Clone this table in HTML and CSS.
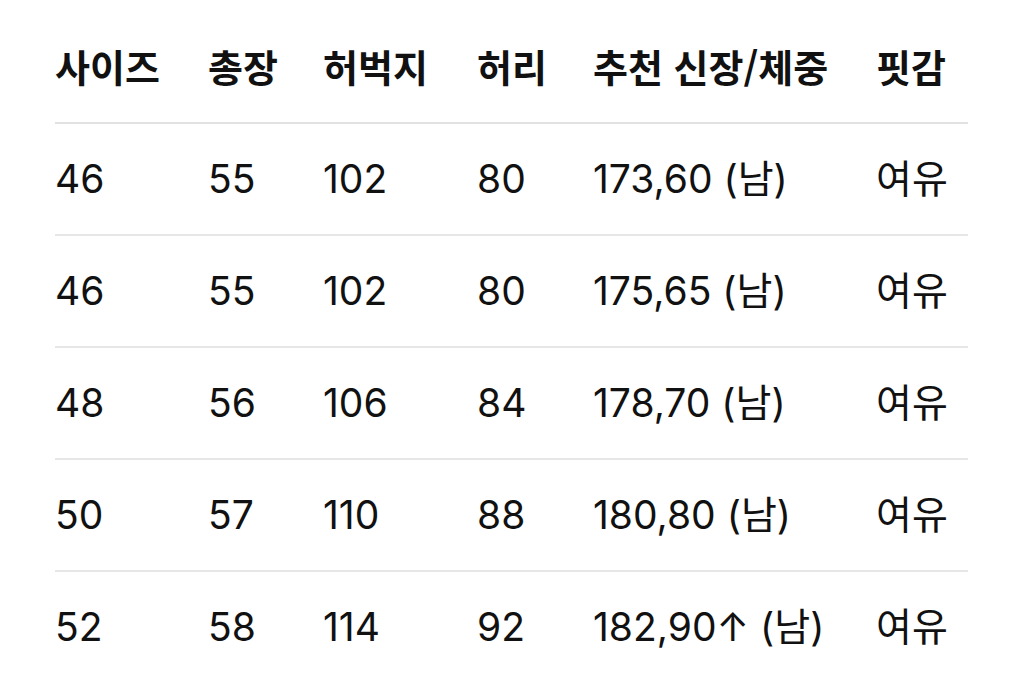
FILE: index.html
```html
<!DOCTYPE html>
<html lang="ko">
<head>
<meta charset="utf-8">
<link rel="stylesheet" href="styles.css">
</head>
<body>
<table class="size-table">
  <colgroup>
    <col class="c1"><col class="c2"><col class="c3"><col class="c4"><col class="c5"><col class="c6">
  </colgroup>
  <thead>
    <tr><th>사이즈</th><th>총장</th><th>허벅지</th><th>허리</th><th>추천 신장/체중</th><th>핏감</th></tr>
  </thead>
  <tbody>
    <tr><td>46</td><td>55</td><td>102</td><td>80</td><td>173,60 (남)</td><td>여유</td></tr>
    <tr><td>46</td><td>55</td><td>102</td><td>80</td><td>175,65 (남)</td><td>여유</td></tr>
    <tr><td>48</td><td>56</td><td>106</td><td>84</td><td>178,70 (남)</td><td>여유</td></tr>
    <tr><td>50</td><td>57</td><td>110</td><td>88</td><td>180,80 (남)</td><td>여유</td></tr>
    <tr><td>52</td><td>58</td><td>114</td><td>92</td><td>182,90↑ (남)</td><td>여유</td></tr>
  </tbody>
</table>
</body>
</html>
```
FILE: styles.css
```css
html, body {
  margin: 0;
  padding: 0;
  background: #ffffff;
}
body {
  padding: 0 56px 0 55px;
  font-family: "Inter", "Noto Sans CJK KR", sans-serif;
  color: #111111;
}
.size-table {
  width: 913px;
  border-collapse: collapse;
  table-layout: fixed;
}
.c1 { width: 153px; }
.c2 { width: 115px; }
.c3 { width: 154px; }
.c4 { width: 116px; }
.c5 { width: 283px; }
.c6 { width: 92px; }
.size-table th,
.size-table td {
  text-align: left;
  padding: 0;
  white-space: nowrap;
  vertical-align: middle;
  overflow: visible;
}
.size-table th {
  font-family: "Noto Sans CJK KR", sans-serif;
  font-weight: 700;
  font-size: 38px;
  line-height: 1.2;
  height: 112px;
  padding-top: 10px;
  border-bottom: 2px solid #e2e2e2;
}
.size-table td {
  font-size: 39px;
  font-weight: 400;
  line-height: 1.2;
  height: 110px;
  border-bottom: 2px solid #e6e6e6;
}
.size-table tbody tr:last-child td {
  border-bottom: none;
}
```
